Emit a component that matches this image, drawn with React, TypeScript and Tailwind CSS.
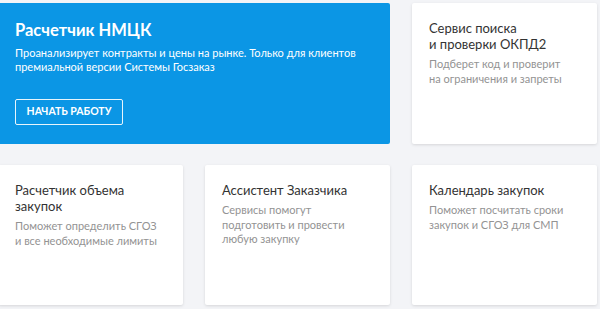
const cards = [
  {
    title: ["Расчетчик объема", "закупок"],
    text: ["Поможет определить СГОЗ", "и все необходимые лимиты"],
  },
  {
    title: ["Ассистент Заказчика"],
    text: ["Сервисы помогут", "подготовить и провести", "любую закупку"],
  },
  {
    title: ["Календарь закупок"],
    text: ["Поможет посчитать сроки", "закупок и СГОЗ для СМП"],
  },
];

const ServiceCard = ({ title, text }: { title: string[]; text: string[] }) => (
  <div className="bg-white rounded-[2px] shadow-[0_1px_3px_rgba(0,0,0,0.12)] pl-[17px] pr-2 pt-[17px] whitespace-nowrap">
    <h3 className="text-[13px] leading-[16px] text-[#333]">
      {title.map((t) => (
        <span key={t} className="block">
          {t}
        </span>
      ))}
    </h3>
    <p className="mt-[5px] text-[11px] leading-[14.5px] text-[#939393]">
      {text.map((t) => (
        <span key={t} className="block">
          {t}
        </span>
      ))}
    </p>
  </div>
);

export default function App() {
  return (
    <div
      className="h-[309px] w-[600px] overflow-hidden bg-[#f3f4f7] pt-[3px]"
      style={{ fontFamily: "Lato, sans-serif" }}
    >
      <div className="-ml-[2px] grid grid-cols-[185px_185px_185px] grid-rows-[141px_140px] gap-x-[22px] gap-y-[21px]">
        <div className="col-span-2 flex flex-col bg-[#0b96e5] rounded-[2px] pl-[17px] pt-[16px] text-white whitespace-nowrap">
          <h2 className="text-[16.5px] leading-[22px] font-bold">Расчетчик НМЦК</h2>
          <p className="mt-[5px] text-[11px] leading-[13.5px]">
            <span className="block">Проанализирует контракты и цены на рынке. Только для клиентов</span>
            <span className="block">премиальной версии Системы Госзаказ</span>
          </p>
          <button className="mt-[26px] flex h-[26px] w-[108px] items-center justify-center border border-white/90 rounded-[2px] text-[10.5px] font-bold uppercase">
            Начать работу
          </button>
        </div>
        <ServiceCard
          title={["Сервис поиска", "и проверки ОКПД2"]}
          text={["Подберет код и проверит", "на ограничения и запреты"]}
        />
        {cards.map((c) => (
          <ServiceCard key={c.title[0]} title={c.title} text={c.text} />
        ))}
      </div>
    </div>
  );
}
